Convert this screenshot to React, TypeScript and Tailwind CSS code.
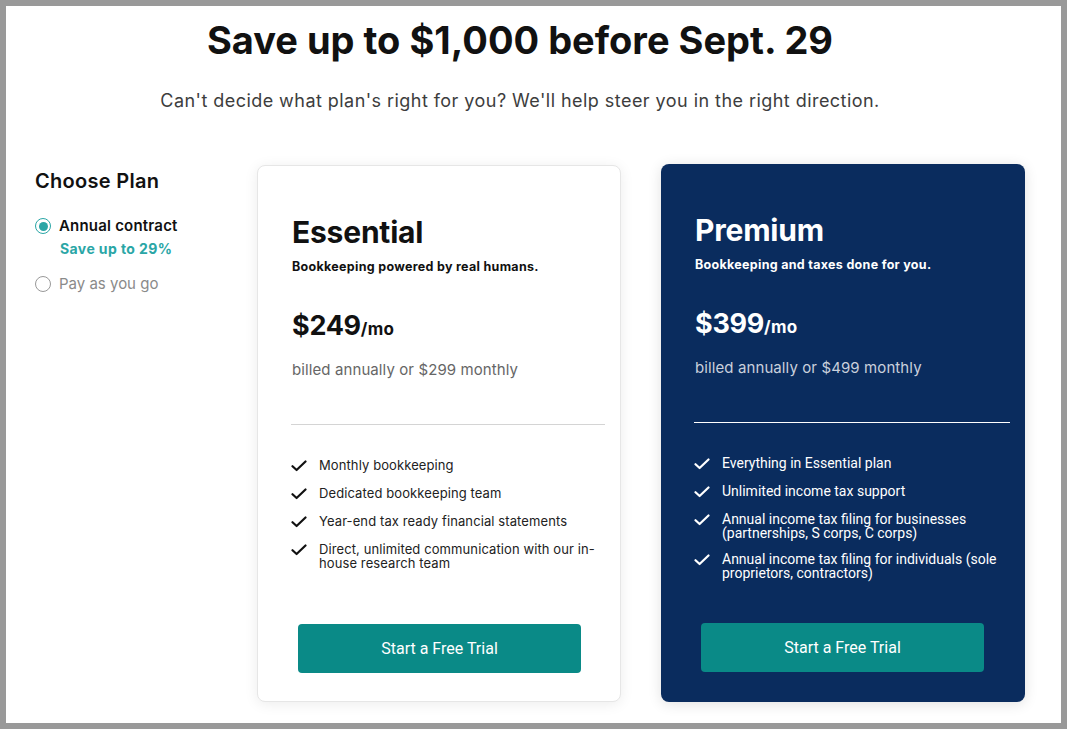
import React from "react";

const CheckIcon = ({ color }: { color: string }) => (
  <svg width="16" height="12" viewBox="0 0 16 12" fill="none" className="shrink-0 mt-[2px]">
    <path d="M1.5 6.2 5.6 10 14.5 1.5" stroke={color} strokeWidth="2.2" strokeLinecap="round" strokeLinejoin="round" />
  </svg>
);

type Plan = {
  name: string;
  tagline: string;
  price: string;
  billed: string;
  features: string[];
  dark: boolean;
};

const plans: Plan[] = [
  {
    name: "Essential",
    tagline: "Bookkeeping powered by real humans.",
    price: "$249",
    billed: "billed annually or $299 monthly",
    features: [
      "Monthly bookkeeping",
      "Dedicated bookkeeping team",
      "Year-end tax ready financial statements",
      "Direct, unlimited communication with our in-house research team",
    ],
    dark: false,
  },
  {
    name: "Premium",
    tagline: "Bookkeeping and taxes done for you.",
    price: "$399",
    billed: "billed annually or $499 monthly",
    features: [
      "Everything in Essential plan",
      "Unlimited income tax support",
      "Annual income tax filing for businesses (partnerships, S corps, C corps)",
      "Annual income tax filing for individuals (sole proprietors, contractors)",
    ],
    dark: true,
  },
];

function PlanCard({ plan }: { plan: Plan }) {
  const d = plan.dark;
  return (
    <div
      className={
        d
          ? "w-[364px] h-[538px] mt-[-1px] rounded-[8px] bg-[#0a2c5e] shadow-[0_2px_14px_rgba(0,0,0,0.12)] flex flex-col pl-[33px] pr-[15px] pt-[48px] pb-[30px]"
          : "w-[364px] h-[537px] rounded-[8px] bg-white border border-[#e6e6e6] shadow-[0_2px_14px_rgba(0,0,0,0.08)] flex flex-col pl-[33px] pr-[15px] pt-[48px] pb-[28px]"
      }
    >
      <h2
        className={
          "font-['Inter',sans-serif] font-bold tracking-[-0.2px] text-[30px] leading-[36px] pl-[1px] " +
          (d ? "text-white" : "text-[#111]")
        }
      >
        {plan.name}
      </h2>
      <p
        className={
          "mt-[9px] font-['Inter',sans-serif] font-bold text-[12.5px] tracking-[0.3px] leading-[16px] pl-[1px] " +
          (d ? "text-white" : "text-[#111]")
        }
      >
        {plan.tagline}
      </p>
      <div className={"mt-[34px] flex items-baseline pl-[1px] font-['Inter',sans-serif] font-bold " + (d ? "text-white" : "text-[#111]")}>
        <span className="text-[27px] leading-[34px] tracking-[-0.3px]">{plan.price}</span>
        <span className="text-[17px] leading-[20px] tracking-[0.3px]">/mo</span>
      </div>
      <p
        className={
          "mt-[17px] font-['Inter',sans-serif] text-[15px] tracking-[0.1px] leading-[20px] pl-[1px] " +
          (d ? "text-[#c9d0dc]" : "text-[#666]")
        }
      >
        {plan.billed}
      </p>
      <div className={"mt-[44px] h-px " + (d ? "bg-white" : "bg-[#d4d4d4]")} />
      <ul className="mt-[33px] flex flex-col gap-[14px] pr-[8px]">
        {plan.features.map((f, i) => (
          <li key={f} className={"flex gap-[12px] items-start " + (d && i === 3 ? "mt-[-2px]" : "")}>
            <CheckIcon color={d ? "#ffffff" : "#111111"} />
            <span
              className={
                d
                  ? "font-['Roboto',sans-serif] text-[14px] leading-[14px] text-white"
                  : "font-['Inter',sans-serif] text-[13px] tracking-[0.1px] leading-[14px] text-[#222]"
              }
            >
              {f}
            </span>
          </li>
        ))}
      </ul>
      <button className="mt-auto ml-[7px] w-[283px] h-[49px] rounded-[4px] bg-[#0a8a87] text-white font-['Roboto',sans-serif] text-[16px]">
        Start a Free Trial
      </button>
    </div>
  );
}

export default function App() {
  return (
    <div className="w-full h-[729px] bg-[#999999] p-[6px]">
      <div className="w-full h-full bg-white flex flex-col overflow-hidden">
        <div className="pr-[27px] flex flex-col">
          <h1 className="mt-[12px] text-center font-['Inter',sans-serif] font-bold text-[38px] leading-[44px] text-[#111]">
            Save up to $1,000 before Sept. 29
          </h1>
          <p className="mt-[27px] text-center font-['Inter',sans-serif] text-[18px] tracking-[0.45px] leading-[24px] text-[#3d3d3d]">
            Can't decide what plan's right for you? We'll help steer you in the right direction.
          </p>
        </div>
        <div className="mt-[52px] flex pl-[29px]">
          <div className="w-[222px] pt-[4px]">
            <h3 className="font-['Inter',sans-serif] font-semibold text-[20px] tracking-[0.3px] leading-[24px] text-[#111]">Choose Plan</h3>
            <div className="mt-[23px] flex flex-col">
              <label className="flex items-center gap-[8px]">
                <span className="w-[16px] h-[16px] rounded-full border-[1.5px] border-[#2aa6a6] flex items-center justify-center">
                  <span className="w-[9px] h-[9px] rounded-full bg-[#2aa6a6]" />
                </span>
                <span className="font-['Inter',sans-serif] font-semibold text-[15px] tracking-[0.2px] leading-[20px] text-[#111]">Annual contract</span>
              </label>
              <span className="mt-[3px] ml-[25px] font-['Inter',sans-serif] font-bold text-[14px] tracking-[0.4px] leading-[20px] text-[#2aa6a6]">
                Save up to 29%
              </span>
              <label className="mt-[15px] flex items-center gap-[8px]">
                <span className="w-[16px] h-[16px] rounded-full border-[1.5px] border-[#999]" />
                <span className="font-['Inter',sans-serif] text-[15px] leading-[20px] text-[#8a8a8a]">Pay as you go</span>
              </label>
            </div>
          </div>
          <div className="flex gap-[40px]">
            {plans.map((p) => (
              <PlanCard key={p.name} plan={p} />
            ))}
          </div>
        </div>
      </div>
    </div>
  );
}
